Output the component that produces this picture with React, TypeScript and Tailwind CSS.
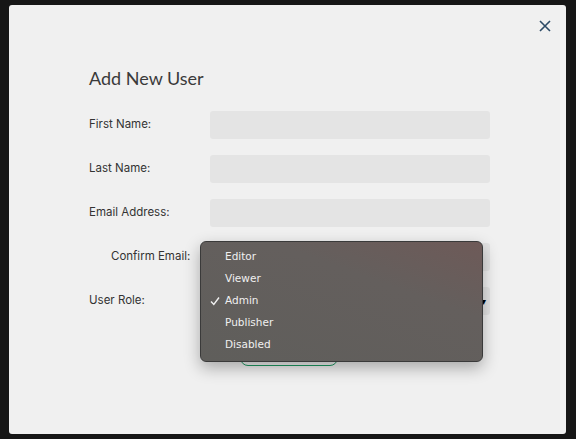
import React from "react";

const Field = ({ label, indent = false }: { label: string; indent?: boolean }) => (
  <div className="flex items-center h-[28px] mb-[16px]">
    <div className={`w-[121px] text-[11.5px] text-[#333] ${indent ? "pl-[22px]" : ""}`}>{label}</div>
    <div className="w-[280px] h-[28px] rounded-[3px] bg-[#e4e4e4]" />
  </div>
);

export default function App() {
  return (
    <div className="w-[576px] h-[439px] bg-[#161616] pt-[5px] pl-[9px] overflow-hidden" style={{ fontFamily: "Inter, 'Noto Sans', sans-serif" }}>
      <div className="relative w-[557px] h-[429px] bg-[#f0f0f0] rounded-[3px]">
        <button className="absolute right-[15px] top-[15px] text-[#2c4a66]">
          <svg width="12" height="12" viewBox="0 0 12 12"><path d="M1 1L11 11M11 1L1 11" stroke="#2c4a66" strokeWidth="1.6" /></svg>
        </button>
        <div className="pl-[80px] pt-[60px]">
          <div className="text-[18px] leading-[26px] text-[#3a3a3a] mb-[20px]" style={{ fontFamily: "Lato, sans-serif" }}>Add New User</div>
          <Field label="First Name:" />
          <Field label="Last Name:" />
          <Field label="Email Address:" />
          <Field label="Confirm Email:" indent />
          <div className="flex items-center h-[28px]">
            <div className="w-[121px] text-[11.5px] text-[#333]">User Role:</div>
            <div className="w-[280px] h-[28px] rounded-[3px] bg-[#e4e4e4] flex justify-end items-center pr-[4px] text-[10px]">▾</div>
          </div>
          <div className="ml-[151px] mt-[30px] w-[98px] h-[21px] border border-[#1f9a63] rounded-[8px]" />
        </div>
        <div className="absolute left-[191px] top-[236px] w-[283px] h-[121px] rounded-[6px] border border-[#3a3a3a] shadow-[0_6px_16px_rgba(0,0,0,0.3)] py-[4px]"
          style={{ background: "linear-gradient(200deg, #6e5a58 0%, #645f5d 35%, #5f5e5b 100%)" }}>
          {["Editor", "Viewer", "Admin", "Publisher", "Disabled"].map((t) => (
            <div key={t} className="relative h-[22px] flex items-center pl-[24px] text-[10.5px] text-[#f0f0f0]" style={{ fontFamily: "'DejaVu Sans', sans-serif" }}>
              {t === "Admin" && (
                <svg className="absolute left-[9px]" width="10" height="10" viewBox="0 0 10 10"><path d="M1 5.5L3.8 8.5L9 1.5" stroke="#f0f0f0" strokeWidth="1.4" fill="none" /></svg>
              )}
              {t}
            </div>
          ))}
        </div>
      </div>
    </div>
  );
}
